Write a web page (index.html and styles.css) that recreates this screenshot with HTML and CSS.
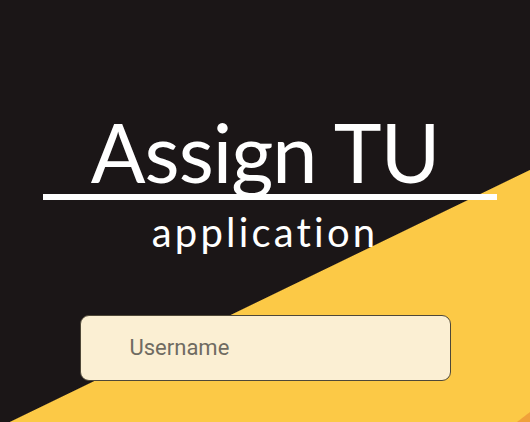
FILE: index.html
```html
<!DOCTYPE html>
<html lang="en">
<head>
<meta charset="utf-8">
<title>Assign TU</title>
<link rel="stylesheet" href="styles.css">
</head>
<body>
<main class="screen">
  <h1 class="title">Assign TU</h1>
  <div class="rule"></div>
  <p class="subtitle">application</p>
  <div class="field">
    <input class="field-input" type="text" placeholder="Username">
  </div>
</main>
</body>
</html>
```
FILE: styles.css
```css
html, body {
  margin: 0;
  padding: 0;
}
.screen {
  width: 530px;
  height: 422px;
  overflow: hidden;
  display: flex;
  flex-direction: column;
  align-items: center;
  background:
    linear-gradient(142.43deg, rgba(240,161,58,0) 649.2px, #f0a13a 650.2px),
    linear-gradient(154.15deg, #1b1617 383.5px, #fcc946 384.5px);
  font-family: "Lato", "Open Sans", sans-serif;
  color: #ffffff;
}
.title {
  margin: 111px 0 0 0;
  font-size: 81px;
  line-height: 1;
  font-weight: 400;
  letter-spacing: -1px;
}
.rule {
  align-self: flex-start;
  margin: 2px 0 0 43px;
  width: 454px;
  height: 6px;
  background: #ffffff;
}
.subtitle {
  margin: 12px 0 0 0;
  font-size: 40px;
  line-height: 1;
  letter-spacing: 3.2px;
}
.field {
  margin-top: 63px;
  width: 371px;
  height: 66px;
  box-sizing: border-box;
  border: 1px solid #4f4838;
  border-radius: 9px;
  background: #fbefd3;
  display: flex;
  align-items: center;
}
.field-input {
  border: 0;
  outline: 0;
  background: transparent;
  margin-left: 49px;
  padding: 0 0 2px 0;
  font-family: "Roboto", sans-serif;
  font-size: 22px;
  color: #333;
  width: 300px;
}
.field-input::placeholder {
  color: #6f6b62;
  opacity: 1;
}
```
